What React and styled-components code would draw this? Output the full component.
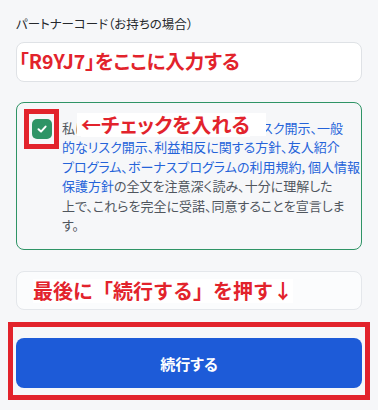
import React from "react";
import styled, { createGlobalStyle } from "styled-components";

const colors = {
  page: "#f6f7f9",
  red: "#e2232c",
  green: "#2f9466",
  blue: "#1d5bd8",
  link: "#2563d9",
  text: "#50565e",
  border: "#dfe2e6",
};

const GlobalStyle = createGlobalStyle`
  html, body {
    margin: 0;
    padding: 0;
    background: ${colors.page};
  }
  body {
    font-family: "Noto Sans CJK JP", "Noto Sans", sans-serif;
    font-feature-settings: "palt";
  }
`;

const Page = styled.div`
  padding: 14px 16px 0 16px;
  display: flex;
  flex-direction: column;
`;

const Label = styled.div`
  font-size: 12.5px;
  line-height: 20px;
  color: #25282c;
`;

const InputBox = styled.div`
  margin-top: 8px;
  height: 40px;
  box-sizing: border-box;
  border: 1px solid ${colors.border};
  border-radius: 8px;
  background: #fff;
  display: flex;
  align-items: center;
  padding-left: 2px;
  padding-bottom: 2px;
`;

const Note = styled.span`
  font-size: ${(p) => p.$size || 20}px;
  font-weight: 700;
  color: ${colors.red};
  background: #fff;
  line-height: 24px;
  white-space: nowrap;
  font-feature-settings: ${(p) => (p.$wide ? "normal" : "palt")};
`;

const Agreement = styled.div`
  position: relative;
  margin-top: 20px;
  height: 148px;
  box-sizing: border-box;
  border: 1px solid ${colors.green};
  border-radius: 8px;
  padding: 15px 8px 0 15px;
  display: flex;
  gap: 10px;
  overflow: hidden;
`;

const Check = styled.div`
  flex: none;
  width: 20px;
  height: 20px;
  border-radius: 5px;
  background: ${colors.green};
  display: flex;
  align-items: center;
  justify-content: center;
  margin-top: 1px;
`;

const Terms = styled.div`
  font-size: 13px;
  line-height: 19.4px;
  color: ${colors.text};
  white-space: nowrap;
`;

const Link = styled.span`
  color: ${colors.link};
`;

const CheckFrame = styled.div`
  position: absolute;
  left: 7px;
  top: 6px;
  width: 35px;
  height: 40px;
  border: 5px solid ${colors.red};
  box-sizing: border-box;
  pointer-events: none;
`;

const Overlay = styled.div`
  position: absolute;
  left: 60px;
  top: 10px;
  width: 189px;
  height: 23px;
  background: #fff;
  display: flex;
  align-items: center;
  padding-left: 4px;
  box-sizing: border-box;
`;

const HintBox = styled.div`
  margin-top: 21px;
  height: 39px;
  box-sizing: border-box;
  border: 1px solid #e4e7eb;
  border-radius: 8px;
  background: #fbfcfd;
  display: flex;
  align-items: center;
  padding-left: 16px;
`;

const ButtonFrame = styled.div`
  margin: 12px -8px 0 -8px;
  border: 5px solid ${colors.red};
  padding: 11px 3px 7px 3px;
  display: flex;
`;

const Button = styled.button`
  flex: 1;
  height: 50px;
  border: none;
  border-radius: 8px;
  background: ${colors.blue};
  color: #fff;
  font-family: inherit;
  font-feature-settings: "palt";
  font-size: 15px;
  font-weight: 700;
  cursor: pointer;
`;

function App() {
  return (
    <>
      <GlobalStyle />
      <Page>
        <Label>パートナーコード（お持ちの場合）</Label>
        <InputBox>
          <Note $size={19.5}>「R9YJ7」をここに入力する</Note>
        </InputBox>

        <Agreement>
          <Check>
            <svg width="12" height="12" viewBox="0 0 12 12">
              <path d="M2.5 6.3 L5 8.6 L9.6 3.6" fill="none" stroke="#fff" strokeWidth="2" strokeLinecap="round" strokeLinejoin="round" />
            </svg>
          </Check>
          <Terms>
            私は、<Link>顧客契約書、注文執行方針、リスク開示、一般</Link>
            <br />
            <Link>的なリスク開示、利益相反に関する方針、友人紹介</Link>
            <br />
            <Link>プログラム、ボーナスプログラムの利用規約, 個人情報</Link>
            <br />
            <Link>保護方針</Link>の全文を注意深く読み、十分に理解した
            <br />
            上で、これらを完全に受諾、同意することを宣言しま
            <br />
            す。
          </Terms>
          <CheckFrame />
          <Overlay>
            <Note>←チェックを入れる</Note>
          </Overlay>
        </Agreement>

        <HintBox>
          <Note $wide>最後に「続行する」を押す↓</Note>
        </HintBox>

        <ButtonFrame>
          <Button>続行する</Button>
        </ButtonFrame>
      </Page>
    </>
  );
}

export default App;
